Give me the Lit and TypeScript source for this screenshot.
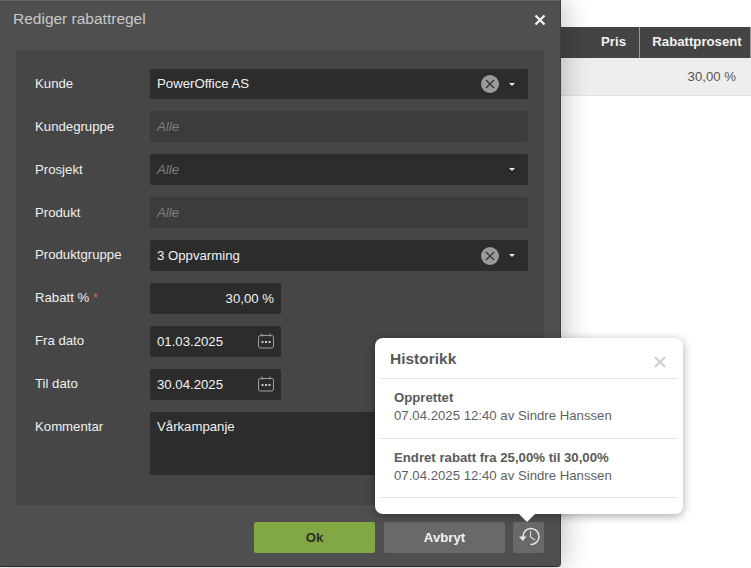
import { LitElement, html, css } from "lit";
import { customElement } from "lit/decorators.js";

const caret = html`<svg class="caret" width="6" height="3" viewBox="0 0 6 3"><path d="M0 0H6L3 3Z" fill="#e8e8e8"/></svg>`;
const clear = html`<svg class="clear" width="18" height="18" viewBox="0 0 18 18"><circle cx="9" cy="9" r="9" fill="#9a9a9a"/><path d="M5 5L13 13M13 5L5 13" stroke="#2c2c2c" stroke-width="1.1"/></svg>`;
const cal = html`<svg class="cal" width="16" height="16" viewBox="0 0 16 16" fill="none" stroke="#a0a0a0" stroke-width="1"><rect x="0.5" y="2.5" width="15" height="12.5" rx="2"/><path d="M4 0.5V3.5M12 0.5V3.5"/><g fill="#c8c8c8" stroke="none"><rect x="3.5" y="8" width="2" height="2"/><rect x="7" y="8" width="2" height="2"/><rect x="10.5" y="8" width="2" height="2"/></g></svg>`;

@customElement("app-root")
export class AppRoot extends LitElement {
  static styles = css`
    :host { display: block; position: relative; width: 751px; height: 568px; overflow: hidden; background: #fff; font-family: "Liberation Sans", Arial, sans-serif; font-size: 13.2px; }
    .table { padding-top: 27px; padding-left: 561px; }
    .thead { display: flex; justify-content: flex-end; height: 31px; background: #444; color: #f2f2f2; font-weight: 700; line-height: 30px; }
    .th-pris { padding-right: 13px; border-right: 1px solid #9a9a9a; }
    .th-rab { width: 111px; box-sizing: border-box; text-align: center; padding-left: 4px; border-right: 1px solid #9a9a9a; }
    .trow { height: 38px; box-sizing: border-box; background: #eee; border-bottom: 1px solid #e2e2e2; color: #555; line-height: 37px; text-align: right; padding-right: 15px; }
    .dialog { position: absolute; left: 0; top: 0; width: 561px; height: 567px; box-sizing: border-box; background: #4f4f4f; border-top: 1px solid #666; border-bottom: 1px solid #2c2c2c; border-right: 1px solid #3e3e3e; border-radius: 0 0 4px 0; box-shadow: 0 0 30px rgba(0,0,0,.3); display: flex; flex-direction: column; }
    .head { display: flex; justify-content: space-between; align-items: center; height: 49px; padding: 0 14px 12px 13px; box-sizing: border-box; color: #c8c8c8; font-size: 15.5px; }
    .head span { margin-top: -2px; }
    .x { display: block; }
    .panel { margin: 0 16px; height: 455px; box-sizing: border-box; background: #464646; border-radius: 2px; padding: 19px 16px 0 19px; display: flex; flex-direction: column; gap: 12px; color: #f0f0f0; }
    .row { display: flex; align-items: flex-start; }
    .lab { width: 115px; height: 30px; flex: none; line-height: 30px; color: #f0f0f0; }
    .lab.low { line-height: 32px; }
    .star { color: #e0701e; font-size: 12px; }
    .f { box-sizing: border-box; height: 31px; background: #2c2c2c; border-radius: 2px; padding: 0 7px; line-height: 31px; display: flex; align-items: center; color: #f2f2f2; }
    .f.h30 { height: 30px; line-height: 28px; }
    .wide { width: 378px; }
    .narrow { width: 131px; }
    .dis { background: #3c3c3c; }
    .ph { color: #7e7e7e; font-style: italic; }
    .grow { flex: 1; }
    .right { justify-content: flex-end; }
    .clear { margin-right: 10px; }
    .caret { margin-right: 6px; }
    .cal { flex: none; margin: -1px 0 0; }
    .area { height: 63px; align-items: flex-start; line-height: 29px; }
    .foot { display: flex; gap: 9px; padding: 17px 16px 0 254px; }
    .btn { box-sizing: border-box; width: 121px; height: 31px; border-radius: 2px; text-align: center; line-height: 31px; font-weight: 700; }
    .ok { background: #82a846; color: #2d2d2d; }
    .cancel { background: #696969; color: #f2f2f2; }
    .hist { width: 31px; height: 31px; margin-left: -1px; background: #696969; border-radius: 2px; }
    .hist svg { display: block; }
    .pop { position: absolute; left: 375px; top: 338px; width: 308px; height: 176px; box-sizing: border-box; background: #fff; border-radius: 8px; box-shadow: 0 2px 10px rgba(0,0,0,.35); padding: 0 5px; color: #555; }
    .pop::after { content: ""; position: absolute; left: 144px; bottom: -8px; border-left: 8px solid transparent; border-right: 8px solid transparent; border-top: 8px solid #fff; }
    .pop-head { display: flex; justify-content: space-between; height: 41px; border-bottom: 1px solid #e4e4e4; padding: 0 12px 0 10px; box-sizing: border-box; align-items: center; }
    .pop-title { font-weight: 700; font-size: 15.5px; color: #595959; margin-top: 1px; }
    .pop-x { margin-top: 7px; }
    .item { box-sizing: border-box; height: 60px; padding: 10px 0 0 14px; border-bottom: 1px solid #e4e4e4; line-height: 18px; color: #5f5f5f; }
    .item + .item { height: 59px; }
    .item b { display: block; color: #5a5a5a; }
  `;

  private field(label: any, value: string, opts: { dis?: boolean; ph?: boolean; clear?: boolean; caret?: boolean; h30?: boolean; low?: boolean }) {
    return html`<div class="row"><div class="lab ${opts.low ? "low" : ""}">${label}</div>
      <div class="f wide ${opts.dis ? "dis" : ""} ${opts.h30 ? "h30" : ""}">
        <span class="grow ${opts.ph ? "ph" : ""}">${value}</span>
        ${opts.clear ? clear : ""}${opts.caret ? caret : ""}
      </div></div>`;
  }

  private dateField(label: string, value: string) {
    return html`<div class="row"><div class="lab">${label}</div>
      <div class="f narrow"><span class="grow">${value}</span>${cal}</div></div>`;
  }

  render() {
    return html`
      <div class="table">
        <div class="thead"><div class="th-pris">Pris</div><div class="th-rab">Rabattprosent</div></div>
        <div class="trow">30,00 %</div>
      </div>
      <div class="dialog">
        <div class="head"><span>Rediger rabattregel</span>
          <svg class="x" width="12" height="12" viewBox="0 0 12 12"><path d="M1.5 1.5L10.5 10.5M10.5 1.5L1.5 10.5" stroke="#eee" stroke-width="2.4"/></svg>
        </div>
        <div class="panel">
          ${this.field("Kunde", "PowerOffice AS", { clear: true, caret: true, h30: true })}
          ${this.field("Kundegruppe", "Alle", { dis: true, ph: true, low: true })}
          ${this.field("Prosjekt", "Alle", { ph: true, caret: true, low: true })}
          ${this.field("Produkt", "Alle", { dis: true, ph: true, low: true })}
          ${this.field("Produktgruppe", "3 Oppvarming", { clear: true, caret: true })}
          <div class="row"><div class="lab">Rabatt % <span class="star">*</span></div><div class="f narrow right">30,00 %</div></div>
          ${this.dateField("Fra dato", "01.03.2025")}
          ${this.dateField("Til dato", "30.04.2025")}
          <div class="row"><div class="lab">Kommentar</div><div class="f wide area">Vårkampanje</div></div>
        </div>
        <div class="foot">
          <div class="btn ok">Ok</div>
          <div class="btn cancel">Avbryt</div>
          <div class="hist">
            <svg width="31" height="31" viewBox="0 0 31 31" fill="none"><path d="M10 15A8 8 0 1 1 17.5 22.5" stroke="#e8e8e8" stroke-width="1.5"/><path d="M6 14.5H13.5L9.7 19Z" fill="#e8e8e8"/><path d="M17.5 9V15L22 18" stroke="#d8d8d8" stroke-width="1.1"/></svg>
          </div>
        </div>
      </div>
      <div class="pop">
        <div class="pop-head"><span class="pop-title">Historikk</span>
          <svg class="pop-x" width="12" height="12" viewBox="0 0 12 12"><path d="M1 1L11 11M11 1L1 11" stroke="#cfcfcf" stroke-width="2.2"/></svg>
        </div>
        <div class="item"><b>Opprettet</b>07.04.2025 12:40 av Sindre Hanssen</div>
        <div class="item"><b>Endret rabatt fra 25,00% til 30,00%</b>07.04.2025 12:40 av Sindre Hanssen</div>
      </div>
    `;
  }
}
